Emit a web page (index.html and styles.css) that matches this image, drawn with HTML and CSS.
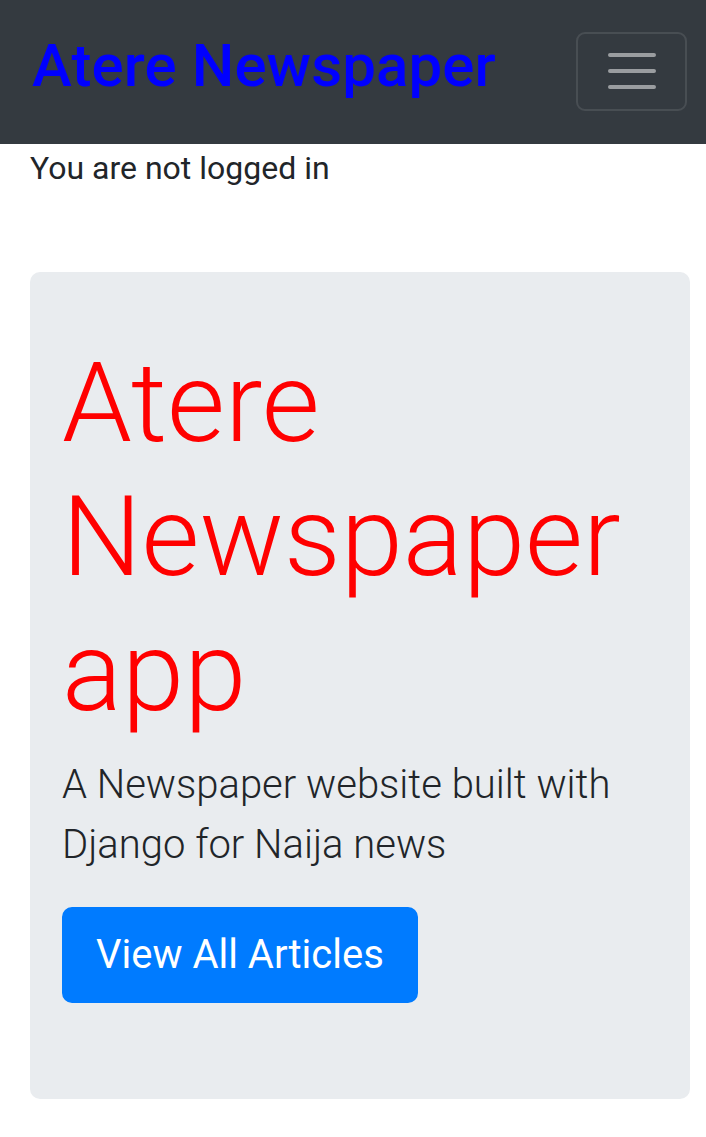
FILE: index.html
```html
<!DOCTYPE html>
<html lang="en">
<head>
<meta charset="utf-8">
<title>Atere Newspaper</title>
<link rel="stylesheet" href="styles.css">
</head>
<body>
<nav class="navbar">
  <a class="navbar-brand" href="#">Atere Newspaper</a>
  <button class="navbar-toggler" type="button" aria-label="Toggle navigation">
    <svg class="toggler-icon" viewBox="0 0 30 30" width="60" height="60">
      <path d="M4 7h22M4 15h22M4 23h22" stroke="rgba(255,255,255,0.5)" stroke-width="2" stroke-linecap="round" fill="none"/>
    </svg>
  </button>
</nav>
<main class="container">
  <p class="status">You are not logged in</p>
  <section class="jumbotron">
    <h1 class="display">Atere Newspaper app</h1>
    <p class="lead">A Newspaper website built with Django for Naija news</p>
    <p class="lead"><a class="btn" href="#">View All Articles</a></p>
  </section>
</main>
</body>
</html>
```
FILE: styles.css
```css
html, body {
  margin: 0;
  padding: 0;
  overflow: hidden;
}
body {
  font-family: Roboto, "Liberation Sans", Arial, sans-serif;
  font-size: 32px;
  line-height: 1.5;
  color: #212529;
  background: #fff;
  height: 1137px;
}
.navbar {
  display: flex;
  align-items: center;
  justify-content: space-between;
  background: #343a40;
  padding: 16px 19px 18px 32px;
}
.navbar-brand {
  font-size: 60px;
  line-height: 90px;
  font-weight: 500;
  padding: 5px 0 15px;
  color: #0000ff;
  text-decoration: none;
  letter-spacing: 0.1px;
}
.navbar-toggler {
  display: flex;
  align-items: center;
  justify-content: center;
  box-sizing: border-box;
  width: 111px;
  height: 79px;
  padding: 0;
  background: transparent;
  border: 2px solid rgba(255,255,255,0.1);
  border-radius: 9px;
}
.toggler-icon {
  display: block;
}
.container {
  padding: 0 16px 0 30px;
}
.status {
  margin: 0 0 80px;
  font-size: 32px;
  line-height: 48px;
}
.jumbotron {
  background: #e9ecef;
  border-radius: 10px;
  padding: 64px 32px;
}
.display {
  margin: 0 0 16px;
  font-size: 112px;
  line-height: 1.2;
  font-weight: 300;
  color: #ff0000;
}
.lead {
  margin: 0 0 32px;
  font-size: 40px;
  line-height: 60px;
  font-weight: 300;
}
.btn {
  display: inline-block;
  padding: 16px 32px;
  border: 2px solid #007bff;
  border-radius: 10px;
  background: #007bff;
  color: #fff;
  font-size: 40px;
  line-height: 60px;
  font-weight: 400;
  text-decoration: none;
  vertical-align: top;
}
```
